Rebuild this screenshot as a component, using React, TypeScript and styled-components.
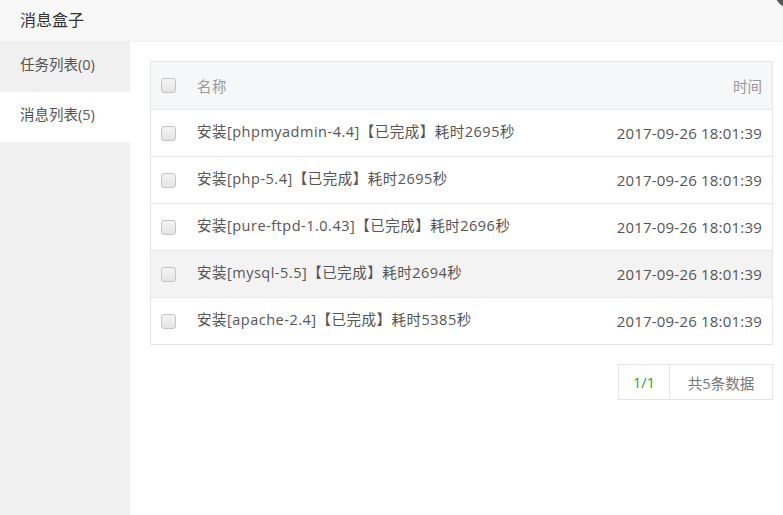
import React from 'react';
import styled, {createGlobalStyle} from 'styled-components';

const GlobalStyle = createGlobalStyle`
  html, body {
    margin: 0;
    padding: 0;
    background: #fff;
  }
  body {
    font-family: "Open Sans", "Noto Sans CJK SC", sans-serif;
    font-size: 14px;
    color: #555;
  }
`;

const Layer = styled.div`
  position: relative;
  width: 783px;
  height: 515px;
  overflow: hidden;
  background: #fff;
  display: flex;
  flex-direction: column;
`;

const CloseButton = styled.div`
  position: absolute;
  top: -22px;
  right: -22px;
  width: 30px;
  height: 30px;
  border-radius: 50%;
  background: #5a5a5a;
`;

const TitleBar = styled.div`
  height: 41px;
  line-height: 40px;
  padding-left: 20px;
  background: #f8f8f8;
  border-bottom: 1px solid #eee;
  font-size: 16px;
  color: #333;
  flex-shrink: 0;
`;

const Body = styled.div`
  flex: 1;
  display: flex;
`;

const Sidebar = styled.div`
  width: 130px;
  background: #f0f0f0;
  flex-shrink: 0;
`;

const SideItem = styled.div<{active?: boolean}>`
  height: 50px;
  line-height: 46px;
  padding-left: 20px;
  font-size: 14.5px;
  color: #555;
  background: ${(props) => (props.active ? '#fff' : 'transparent')};
`;

const Content = styled.div`
  flex: 1;
  padding: 19px 10px 0 20px;
  display: flex;
  flex-direction: column;
`;

const Table = styled.div`
  border: 1px solid #e5e5e5;
`;

const Row = styled.div<{head?: boolean; hover?: boolean}>`
  height: 47px;
  display: flex;
  align-items: center;
  padding: 0 10px;
  border-top: ${(props) => (props.head ? 'none' : '1px solid #e5e5e5')};
  background: ${(props) => (props.head ? '#f6f7f9' : props.hover ? '#f3f3f3' : '#fff')};
  color: ${(props) => (props.head ? '#999' : '#555')};
  box-sizing: border-box;
`;

const CheckBox = styled.span`
  width: 13px;
  height: 13px;
  border: 1px solid #c4c4c4;
  border-radius: 3px;
  background: linear-gradient(#f4f4f4, #e4e4e4);
  margin-right: 21px;
  flex-shrink: 0;
`;

const NameCell = styled.div<{lift?: number}>`
  flex: 1;
  white-space: nowrap;
  font-size: 14.5px;
  letter-spacing: 0.5px;
  margin-top: ${(props) => -(props.lift ?? 0)}px;
`;

const TimeCell = styled.div`
  white-space: nowrap;
  text-align: right;
  font-size: 15px;
  letter-spacing: 0.2px;
  color: #555;
`;

const HeadTime = styled.div`
  font-size: 14.5px;
`;

const Pager = styled.div`
  align-self: flex-end;
  margin-top: 19px;
  display: flex;
  border: 1px solid #e5e5e5;
  height: 34px;
`;

const PageCell = styled.span<{current?: boolean}>`
  display: flex;
  align-items: center;
  justify-content: center;
  width: ${(props) => (props.current ? '50px' : '102px')};
  color: ${(props) => (props.current ? '#20a53a' : '#777')};
  border-left: ${(props) => (props.current ? 'none' : '1px solid #e5e5e5')};
  font-size: 14.5px;
`;

const messages = [
  {name: '安装[phpmyadmin-4.4]【已完成】耗时2695秒', time: '2017-09-26 18:01:39'},
  {name: '安装[php-5.4]【已完成】耗时2695秒', time: '2017-09-26 18:01:39'},
  {name: '安装[pure-ftpd-1.0.43]【已完成】耗时2696秒', time: '2017-09-26 18:01:39'},
  {name: '安装[mysql-5.5]【已完成】耗时2694秒', time: '2017-09-26 18:01:39'},
  {name: '安装[apache-2.4]【已完成】耗时5385秒', time: '2017-09-26 18:01:39'},
];

const App = (): JSX.Element => {
  return (
    <>
      <GlobalStyle />
      <Layer>
        <TitleBar>消息盒子</TitleBar>
        <Body>
          <Sidebar>
            <SideItem>任务列表(0)</SideItem>
            <SideItem active>消息列表(5)</SideItem>
          </Sidebar>
          <Content>
            <Table>
              <Row head>
                <CheckBox />
                <NameCell>名称</NameCell>
                <HeadTime>时间</HeadTime>
              </Row>
              {messages.map((msg, i) => (
                <Row key={i} hover={i === 3}>
                  <CheckBox />
                  <NameCell lift={5}>{msg.name}</NameCell>
                  <TimeCell>{msg.time}</TimeCell>
                </Row>
              ))}
            </Table>
            <Pager>
              <PageCell current>1/1</PageCell>
              <PageCell>共5条数据</PageCell>
            </Pager>
          </Content>
        </Body>
        <CloseButton />
      </Layer>
    </>
  );
};

export default App;
